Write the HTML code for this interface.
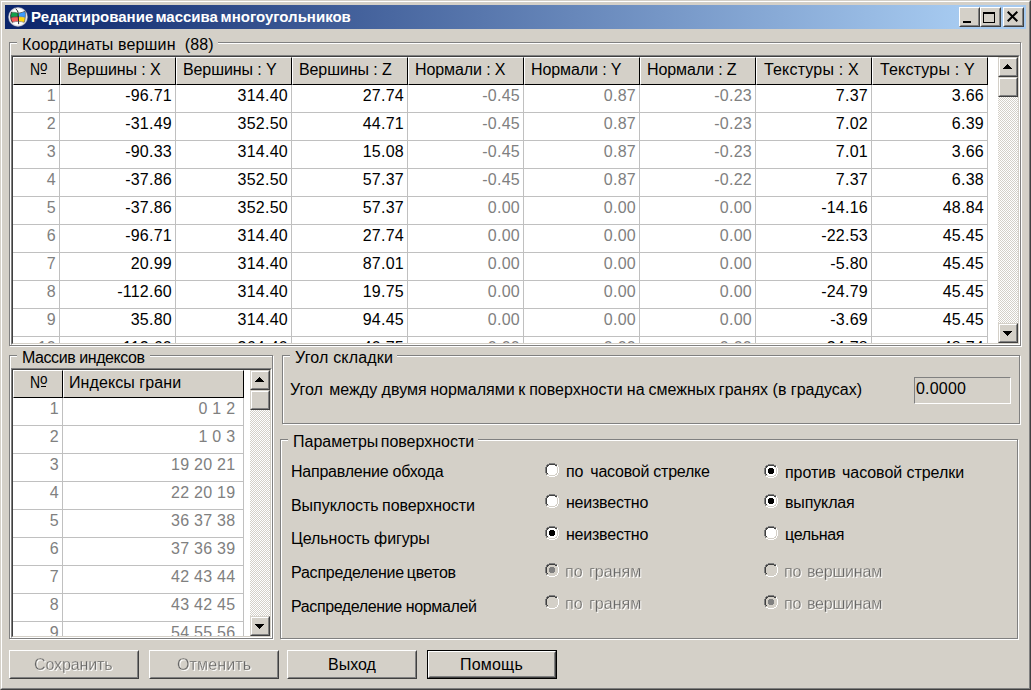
<!DOCTYPE html>
<html><head><meta charset="utf-8"><title>dlg</title>
<style>
html,body{margin:0;padding:0;}
body{width:1031px;height:690px;overflow:hidden;background:#d4d0c8;font-family:"Liberation Sans",sans-serif;font-size:16px;color:#000;position:relative;line-height:18px;}
div,span{box-sizing:border-box;}
.a{position:absolute;}
.t{position:absolute;white-space:pre;line-height:18px;height:18px;}
.dis{color:#666;text-shadow:1px 1px 0 #fff;will-change:transform;-webkit-text-stroke:0.3px #d4d0c8;}
.gw{position:absolute;border:1px solid #fff;}
.gg{position:absolute;border:1px solid #808080;}
.gl{position:absolute;background:#d4d0c8;white-space:pre;line-height:18px;height:18px;}
.gl span{position:absolute;top:0;}
.sunk{position:absolute;border-style:solid;border-width:1px;border-color:#808080 #fff #fff #808080;}
.sunk>.in{position:absolute;left:0;top:0;right:0;bottom:0;border-style:solid;border-width:1px;border-color:#404040 #d4d0c8 #d4d0c8 #404040;background:#fff;overflow:hidden;}
.hc{position:absolute;top:0;height:28px;background:#d4d0c8;border-style:solid;border-width:1px;border-color:#fff #000 #000 #fff;white-space:pre;line-height:18px;}
.hc span{position:absolute;top:3px;}
.hc span.no{width:20px;height:18px;}
.no b{font-weight:normal;position:absolute;left:0;top:0;transform-origin:0 0;transform:scaleX(.87);}
.no i{font-style:normal;position:absolute;left:10.4px;top:-4px;font-size:15px;transform-origin:0 0;transform:scaleX(.9);}
.no u{position:absolute;left:11px;top:12px;width:5px;height:1px;background:#000;}
.row{position:absolute;left:0;height:28px;border-bottom:1px solid #c0c0c0;}
.c{position:absolute;top:0;height:27px;border-right:1px solid #c0c0c0;text-align:right;padding-right:3px;letter-spacing:0.25px;line-height:18px;padding-top:2px;white-space:pre;}
.g{color:#808080;}
.sb{position:absolute;width:20px;background-color:#fff;background-image:linear-gradient(45deg,#d4d0c8 25%,transparent 25%,transparent 75%,#d4d0c8 75%),linear-gradient(45deg,#d4d0c8 25%,transparent 25%,transparent 75%,#d4d0c8 75%);background-size:2px 2px;background-position:0 0,1px 1px;}
.rb{position:absolute;background:#d4d0c8;border-style:solid;border-width:1px;border-color:#d4d0c8 #404040 #404040 #d4d0c8;}
.rb>i{position:absolute;left:0;top:0;right:0;bottom:0;border-style:solid;border-width:1px;border-color:#fff #808080 #808080 #fff;}
.btn{position:absolute;background:#d4d0c8;border-style:solid;border-width:1px;border-color:#fff #404040 #404040 #fff;}
.btn>i{position:absolute;left:0;top:0;right:0;bottom:0;border-style:solid;border-width:1px;border-color:#d4d0c8 #808080 #808080 #d4d0c8;font-style:normal;}
</style></head><body>

<div class="a" style="left:0;top:0;width:1031px;height:690px;border-style:solid;border-width:1px;border-color:#d4d0c8 #404040 #404040 #d4d0c8;"></div>
<div class="a" style="left:1px;top:1px;width:1029px;height:688px;border-style:solid;border-width:1px;border-color:#fff #808080 #808080 #fff;"></div>
<div class="a" style="left:5px;top:5px;width:1021px;height:24px;background:linear-gradient(90deg,#0a246a 0,#a6caf0 954px);"></div>
<svg class="a" style="left:6px;top:5px" width="24" height="24" viewBox="0 0 690 690">
<defs><radialGradient id="ig" cx="50%" cy="50%" r="50%"><stop offset="0.78" stop-color="#fff"/><stop offset="0.9" stop-color="#d4d6de"/><stop offset="1" stop-color="#6c7498"/></radialGradient></defs>
<circle cx="345" cy="343" r="286" fill="url(#ig)"/>
<path d="M160 208 Q260 212 358 238 L362 335 Q250 328 138 358 Q132 275 160 208Z" fill="#12a04c"/>
<path d="M372 238 Q470 226 548 182 Q562 270 552 355 Q465 328 376 328Z" fill="#3c9cff"/>
<path d="M140 368 Q250 338 362 340 L362 468 Q270 466 180 496 Q148 440 140 368Z" fill="#f25858"/>
<path d="M376 335 Q470 340 552 370 Q546 440 520 496 Q450 472 376 468Z" fill="#ffd80c"/>
<path d="M138 360 Q250 330 362 336" fill="none" stroke="#1a1a1a" stroke-width="20"/>
<path d="M362 334 Q465 330 552 360" fill="none" stroke="#3a3a2a" stroke-width="12"/>
<path d="M288 118 Q338 150 348 215 L364 540" fill="none" stroke="#0c0c0c" stroke-width="26" stroke-linecap="round"/>
<path d="M160 200 Q122 280 136 365 Q140 435 186 504" fill="none" stroke="#1c1c1c" stroke-width="24"/>
<path d="M550 180 Q566 270 554 362 Q548 440 522 500" fill="none" stroke="#3c3c3c" stroke-width="18"/>
<path d="M372 232 Q470 220 548 176" fill="none" stroke="#2c2c2c" stroke-width="18"/>
<path d="M160 204 Q260 208 350 232" fill="none" stroke="#3a3a3a" stroke-width="14"/>
<path d="M184 500 Q270 470 362 472 Q450 476 520 500" fill="none" stroke="#5a5a5a" stroke-width="16"/>
</svg>

<div class="t" style="left:31px;top:8px;font-size:15px;font-weight:bold;color:#fff;" id="title">Редактирование <i style="margin-left:-2.0px"></i>массива <i style="margin-left:-1.5px"></i>многоугольников</div>
<div class="a" style="left:959px;top:7px;width:21px;height:20px;background:#d4d0c8;border-style:solid;border-width:1px;border-color:#fff #404040 #404040 #fff;"><i style="position:absolute;left:0;top:0;right:0;bottom:0;border-style:solid;border-width:1px;border-color:#d4d0c8 #808080 #808080 #d4d0c8;"></i><b style="position:absolute;left:3px;top:13px;width:8px;height:2px;background:#000"></b></div>
<div class="a" style="left:980px;top:7px;width:21px;height:20px;background:#d4d0c8;border-style:solid;border-width:1px;border-color:#fff #404040 #404040 #fff;"><i style="position:absolute;left:0;top:0;right:0;bottom:0;border-style:solid;border-width:1px;border-color:#d4d0c8 #808080 #808080 #d4d0c8;"></i><b style="position:absolute;left:2px;top:4px;width:12px;height:11px;border:1px solid #000;border-top-width:2px;box-sizing:border-box"></b></div>
<div class="a" style="left:1003px;top:7px;width:21px;height:20px;background:#d4d0c8;border-style:solid;border-width:1px;border-color:#fff #404040 #404040 #fff;"><i style="position:absolute;left:0;top:0;right:0;bottom:0;border-style:solid;border-width:1px;border-color:#d4d0c8 #808080 #808080 #d4d0c8;"></i><svg style="position:absolute;left:3px;top:3px" width="13" height="13" viewBox="0 0 13 13"><path d="M0.7 0.7 L10.3 10.3 M10.3 0.7 L0.7 10.3" stroke="#000" stroke-width="2" fill="none"/></svg></div>
<div class="gw" style="left:10px;top:43px;width:1012px;height:304px"></div>
<div class="gg" style="left:9px;top:42px;width:1012px;height:304px"></div>
<div class="gl" style="left:17px;top:36px;width:201px"><span id="g1" style="left:5px;letter-spacing:0.136px">Координаты вершин  (88)</span></div>
<div class="gw" style="left:10px;top:356px;width:264px;height:284px"></div>
<div class="gg" style="left:9px;top:355px;width:264px;height:284px"></div>
<div class="gl" style="left:17px;top:349px;width:133px"><span id="g2" style="left:5px;letter-spacing:-0.429px">Массив индексов</span></div>
<div class="gw" style="left:283px;top:356px;width:738px;height:69px"></div>
<div class="gg" style="left:282px;top:355px;width:738px;height:69px"></div>
<div class="gl" style="left:290px;top:349px;width:107px"><span id="g3" style="left:5px;letter-spacing:0.182px">Угол складки</span></div>
<div class="gw" style="left:281px;top:440px;width:738px;height:200px"></div>
<div class="gg" style="left:280px;top:439px;width:738px;height:200px"></div>
<div class="gl" style="left:288px;top:433px;width:190px"><span id="g4" style="left:5px">Параметры <i style="margin-left:-2.0px"></i>поверхности</span></div>
<div class="sunk" style="left:11px;top:55px;width:1009px;height:290px"><div class="in">
<div class="hc" style="left:0px;width:47px"><span class="no" id="h1_0" style="left:16px"><b>N</b><i>o</i><u></u></span></div>
<div class="hc" style="left:47px;width:116px"><span id="h1_1" style="left:6px;letter-spacing:-0.100px">Вершины : X</span></div>
<div class="hc" style="left:163px;width:116px"><span id="h1_2" style="left:6px;letter-spacing:-0.100px">Вершины : Y</span></div>
<div class="hc" style="left:279px;width:116px"><span id="h1_3" style="left:6px;letter-spacing:-0.100px">Вершины : Z</span></div>
<div class="hc" style="left:395px;width:116px"><span id="h1_4" style="left:6px;letter-spacing:-0.100px">Нормали : X</span></div>
<div class="hc" style="left:511px;width:116px"><span id="h1_5" style="left:6px;letter-spacing:-0.100px">Нормали : Y</span></div>
<div class="hc" style="left:627px;width:116px"><span id="h1_6" style="left:6px;letter-spacing:-0.100px">Нормали : Z</span></div>
<div class="hc" style="left:743px;width:116px"><span id="h1_7" style="left:7px;letter-spacing:0.173px">Текстуры : X</span></div>
<div class="hc" style="left:859px;width:116px"><span id="h1_8" style="left:7px;letter-spacing:0.173px">Текстуры : Y</span></div>
<div class="row" style="top:28px;width:975px">
<div class="c g" style="left:0px;width:47px">1</div>
<div class="c" style="left:47px;width:116px">-96.71</div>
<div class="c" style="left:163px;width:116px">314.40</div>
<div class="c" style="left:279px;width:116px">27.74</div>
<div class="c g" style="left:395px;width:116px">-0.45</div>
<div class="c g" style="left:511px;width:116px">0.87</div>
<div class="c g" style="left:627px;width:116px">-0.23</div>
<div class="c" style="left:743px;width:116px">7.37</div>
<div class="c" style="left:859px;width:116px">3.66</div>
</div>
<div class="row" style="top:56px;width:975px">
<div class="c g" style="left:0px;width:47px">2</div>
<div class="c" style="left:47px;width:116px">-31.49</div>
<div class="c" style="left:163px;width:116px">352.50</div>
<div class="c" style="left:279px;width:116px">44.71</div>
<div class="c g" style="left:395px;width:116px">-0.45</div>
<div class="c g" style="left:511px;width:116px">0.87</div>
<div class="c g" style="left:627px;width:116px">-0.23</div>
<div class="c" style="left:743px;width:116px">7.02</div>
<div class="c" style="left:859px;width:116px">6.39</div>
</div>
<div class="row" style="top:84px;width:975px">
<div class="c g" style="left:0px;width:47px">3</div>
<div class="c" style="left:47px;width:116px">-90.33</div>
<div class="c" style="left:163px;width:116px">314.40</div>
<div class="c" style="left:279px;width:116px">15.08</div>
<div class="c g" style="left:395px;width:116px">-0.45</div>
<div class="c g" style="left:511px;width:116px">0.87</div>
<div class="c g" style="left:627px;width:116px">-0.23</div>
<div class="c" style="left:743px;width:116px">7.01</div>
<div class="c" style="left:859px;width:116px">3.66</div>
</div>
<div class="row" style="top:112px;width:975px">
<div class="c g" style="left:0px;width:47px">4</div>
<div class="c" style="left:47px;width:116px">-37.86</div>
<div class="c" style="left:163px;width:116px">352.50</div>
<div class="c" style="left:279px;width:116px">57.37</div>
<div class="c g" style="left:395px;width:116px">-0.45</div>
<div class="c g" style="left:511px;width:116px">0.87</div>
<div class="c g" style="left:627px;width:116px">-0.22</div>
<div class="c" style="left:743px;width:116px">7.37</div>
<div class="c" style="left:859px;width:116px">6.38</div>
</div>
<div class="row" style="top:140px;width:975px">
<div class="c g" style="left:0px;width:47px">5</div>
<div class="c" style="left:47px;width:116px">-37.86</div>
<div class="c" style="left:163px;width:116px">352.50</div>
<div class="c" style="left:279px;width:116px">57.37</div>
<div class="c g" style="left:395px;width:116px">0.00</div>
<div class="c g" style="left:511px;width:116px">0.00</div>
<div class="c g" style="left:627px;width:116px">0.00</div>
<div class="c" style="left:743px;width:116px">-14.16</div>
<div class="c" style="left:859px;width:116px">48.84</div>
</div>
<div class="row" style="top:168px;width:975px">
<div class="c g" style="left:0px;width:47px">6</div>
<div class="c" style="left:47px;width:116px">-96.71</div>
<div class="c" style="left:163px;width:116px">314.40</div>
<div class="c" style="left:279px;width:116px">27.74</div>
<div class="c g" style="left:395px;width:116px">0.00</div>
<div class="c g" style="left:511px;width:116px">0.00</div>
<div class="c g" style="left:627px;width:116px">0.00</div>
<div class="c" style="left:743px;width:116px">-22.53</div>
<div class="c" style="left:859px;width:116px">45.45</div>
</div>
<div class="row" style="top:196px;width:975px">
<div class="c g" style="left:0px;width:47px">7</div>
<div class="c" style="left:47px;width:116px">20.99</div>
<div class="c" style="left:163px;width:116px">314.40</div>
<div class="c" style="left:279px;width:116px">87.01</div>
<div class="c g" style="left:395px;width:116px">0.00</div>
<div class="c g" style="left:511px;width:116px">0.00</div>
<div class="c g" style="left:627px;width:116px">0.00</div>
<div class="c" style="left:743px;width:116px">-5.80</div>
<div class="c" style="left:859px;width:116px">45.45</div>
</div>
<div class="row" style="top:224px;width:975px">
<div class="c g" style="left:0px;width:47px">8</div>
<div class="c" style="left:47px;width:116px">-112.60</div>
<div class="c" style="left:163px;width:116px">314.40</div>
<div class="c" style="left:279px;width:116px">19.75</div>
<div class="c g" style="left:395px;width:116px">0.00</div>
<div class="c g" style="left:511px;width:116px">0.00</div>
<div class="c g" style="left:627px;width:116px">0.00</div>
<div class="c" style="left:743px;width:116px">-24.79</div>
<div class="c" style="left:859px;width:116px">45.45</div>
</div>
<div class="row" style="top:252px;width:975px">
<div class="c g" style="left:0px;width:47px">9</div>
<div class="c" style="left:47px;width:116px">35.80</div>
<div class="c" style="left:163px;width:116px">314.40</div>
<div class="c" style="left:279px;width:116px">94.45</div>
<div class="c g" style="left:395px;width:116px">0.00</div>
<div class="c g" style="left:511px;width:116px">0.00</div>
<div class="c g" style="left:627px;width:116px">0.00</div>
<div class="c" style="left:743px;width:116px">-3.69</div>
<div class="c" style="left:859px;width:116px">45.45</div>
</div>
<div class="row" style="top:280px;width:975px">
<div class="c g" style="left:0px;width:47px">10</div>
<div class="c" style="left:47px;width:116px">112.60</div>
<div class="c" style="left:163px;width:116px">364.40</div>
<div class="c" style="left:279px;width:116px">40.75</div>
<div class="c g" style="left:395px;width:116px">0.00</div>
<div class="c g" style="left:511px;width:116px">0.00</div>
<div class="c g" style="left:627px;width:116px">0.00</div>
<div class="c" style="left:743px;width:116px">-34.78</div>
<div class="c" style="left:859px;width:116px">48.74</div>
</div>
<div class="sb" style="left:985px;top:0;height:286px"></div>
<div class="rb" style="left:985px;top:0;width:20px;height:20px"><i></i><svg style="position:absolute;left:4px;top:6px" width="9" height="5" viewBox="0 0 9 5" shape-rendering="crispEdges"><path d="M4 0h1v1h1v1h1v1h1v1h1v1H0v-1h1v-1h1v-1h1v-1h1z" fill="#000"/></svg></div>
<div class="rb" style="left:985px;top:20px;width:20px;height:20px"><i></i></div>
<div class="rb" style="left:985px;top:266px;width:20px;height:20px"><i></i><svg style="position:absolute;left:4px;top:7px" width="9" height="5" viewBox="0 0 9 5" shape-rendering="crispEdges"><path d="M0 0h9v1h-1v1h-1v1h-1v1h-1v1h-1v-1h-1v-1h-1v-1h-1v-1h-1z" fill="#000"/></svg></div>
</div></div>
<div class="sunk" style="left:11px;top:368px;width:261px;height:270px"><div class="in">
<div class="hc" style="left:0;width:50px"><span class="no" id="h2_0" style="left:16px"><b>N</b><i>o</i><u></u></span></div>
<div class="hc" style="left:50px;width:181px"><span id="h2_1" style="left:5px;letter-spacing:0.083px">Индексы грани</span></div>
<div class="row" style="top:28px;width:231px"><div class="c g" style="left:0;width:50px">1</div><div class="c g" style="left:50px;width:181px">0 1 2 </div></div>
<div class="row" style="top:56px;width:231px"><div class="c g" style="left:0;width:50px">2</div><div class="c g" style="left:50px;width:181px">1 0 3 </div></div>
<div class="row" style="top:84px;width:231px"><div class="c g" style="left:0;width:50px">3</div><div class="c g" style="left:50px;width:181px">19 20 21 </div></div>
<div class="row" style="top:112px;width:231px"><div class="c g" style="left:0;width:50px">4</div><div class="c g" style="left:50px;width:181px">22 20 19 </div></div>
<div class="row" style="top:140px;width:231px"><div class="c g" style="left:0;width:50px">5</div><div class="c g" style="left:50px;width:181px">36 37 38 </div></div>
<div class="row" style="top:168px;width:231px"><div class="c g" style="left:0;width:50px">6</div><div class="c g" style="left:50px;width:181px">37 36 39 </div></div>
<div class="row" style="top:196px;width:231px"><div class="c g" style="left:0;width:50px">7</div><div class="c g" style="left:50px;width:181px">42 43 44 </div></div>
<div class="row" style="top:224px;width:231px"><div class="c g" style="left:0;width:50px">8</div><div class="c g" style="left:50px;width:181px">43 42 45 </div></div>
<div class="row" style="top:252px;width:231px"><div class="c g" style="left:0;width:50px">9</div><div class="c g" style="left:50px;width:181px">54 55 56 </div></div>
<div class="row" style="top:280px;width:231px"><div class="c g" style="left:0;width:50px">10</div><div class="c g" style="left:50px;width:181px">57 55 54 </div></div>
<div class="sb" style="left:237px;top:0;height:266px"></div>
<div class="rb" style="left:237px;top:0;width:20px;height:20px"><i></i><svg style="position:absolute;left:4px;top:6px" width="9" height="5" viewBox="0 0 9 5" shape-rendering="crispEdges"><path d="M4 0h1v1h1v1h1v1h1v1h1v1H0v-1h1v-1h1v-1h1v-1h1z" fill="#000"/></svg></div>
<div class="rb" style="left:237px;top:20px;width:20px;height:20px"><i></i></div>
<div class="rb" style="left:237px;top:246px;width:20px;height:20px"><i></i><svg style="position:absolute;left:4px;top:7px" width="9" height="5" viewBox="0 0 9 5" shape-rendering="crispEdges"><path d="M0 0h9v1h-1v1h-1v1h-1v1h-1v1h-1v-1h-1v-1h-1v-1h-1v-1h-1z" fill="#000"/></svg></div>
</div></div>
<div class="t" id="ang" style="left:290px;letter-spacing:0.014px;top:381px">Угол <i style="margin-left:2.0px"></i>между двумя <i style="margin-left:-1.0px"></i>нормалями <i style="margin-left:-1.0px"></i>к <i style="margin-left:-0.5px"></i>поверхности <i style="margin-left:-0.5px"></i>на <i style="margin-left:-0.5px"></i>смежных <i style="margin-left:-1.0px"></i>гранях (в градусах)</div>
<div class="a" style="left:914px;top:377px;width:97px;height:27px;border-style:solid;border-width:1px;border-color:#808080 #fff #fff #808080;"><span class="t" id="edit" style="left:1px;letter-spacing:0.200px;top:2px">0.0000</span></div>
<div class="t" id="lab0" style="left:291px;letter-spacing:-0.235px;top:463px">Направление обхода</div>
<div class="t" id="lab1" style="left:291px;letter-spacing:-0.048px;top:497px">Выпуклость <i style="margin-left:-1.0px"></i>поверхности</div>
<div class="t" id="lab2" style="left:291px;letter-spacing:-0.067px;top:530px">Цельность фигуры</div>
<div class="t" id="lab3" style="left:291px;letter-spacing:-0.211px;top:564px">Распределение <i style="margin-left:-1.5px"></i>цветов</div>
<div class="t" id="lab4" style="left:291px;letter-spacing:-0.381px;top:598px">Распределение нормалей</div>
<svg class="a" style="left:545px;top:463px" width="14" height="14" viewBox="0 0 14 14" shape-rendering="crispEdges"><path d="M4 0h6v1h-6zM2 1h2v1h-2zM10 1h2v1h-2zM1 2h1v1h-1zM1 3h1v1h-1zM0 4h1v1h-1zM0 5h1v1h-1zM0 6h1v1h-1zM0 7h1v1h-1zM0 8h1v1h-1zM0 9h1v1h-1zM1 10h1v1h-1zM1 11h1v1h-1z" fill="#808080"/><path d="M4 1h6v1h-6zM2 2h2v1h-2zM10 2h2v1h-2zM2 3h1v1h-1zM1 4h1v1h-1zM1 5h1v1h-1zM1 6h1v1h-1zM1 7h1v1h-1zM1 8h1v1h-1zM1 9h1v1h-1zM2 10h1v1h-1z" fill="#404040"/><path d="M4 2h6v1h-6zM3 3h8v1h-8zM2 4h10v1h-10zM2 5h10v1h-10zM2 6h10v1h-10zM2 7h10v1h-10zM2 8h10v1h-10zM2 9h10v1h-10zM3 10h8v1h-8zM4 11h6v1h-6z" fill="#fff"/><path d="M12 2h1v1h-1zM12 3h1v1h-1zM13 4h1v1h-1zM13 5h1v1h-1zM13 6h1v1h-1zM13 7h1v1h-1zM13 8h1v1h-1zM13 9h1v1h-1zM12 10h1v1h-1zM12 11h1v1h-1zM2 12h2v1h-2zM10 12h2v1h-2zM4 13h6v1h-6z" fill="#ffffff"/><path d="M11 3h1v1h-1zM12 4h1v1h-1zM12 5h1v1h-1zM12 6h1v1h-1zM12 7h1v1h-1zM12 8h1v1h-1zM12 9h1v1h-1zM11 10h1v1h-1zM2 11h2v1h-2zM10 11h2v1h-2zM4 12h6v1h-6z" fill="#d4d0c8"/></svg>
<svg class="a" style="left:764px;top:464px" width="14" height="14" viewBox="0 0 14 14" shape-rendering="crispEdges"><path d="M4 0h6v1h-6zM2 1h2v1h-2zM10 1h2v1h-2zM1 2h1v1h-1zM1 3h1v1h-1zM0 4h1v1h-1zM0 5h1v1h-1zM0 6h1v1h-1zM0 7h1v1h-1zM0 8h1v1h-1zM0 9h1v1h-1zM1 10h1v1h-1zM1 11h1v1h-1z" fill="#808080"/><path d="M4 1h6v1h-6zM2 2h2v1h-2zM10 2h2v1h-2zM2 3h1v1h-1zM1 4h1v1h-1zM1 5h1v1h-1zM1 6h1v1h-1zM1 7h1v1h-1zM1 8h1v1h-1zM1 9h1v1h-1zM2 10h1v1h-1z" fill="#404040"/><path d="M4 2h6v1h-6zM3 3h8v1h-8zM2 4h10v1h-10zM2 5h10v1h-10zM2 6h10v1h-10zM2 7h10v1h-10zM2 8h10v1h-10zM2 9h10v1h-10zM3 10h8v1h-8zM4 11h6v1h-6z" fill="#fff"/><path d="M12 2h1v1h-1zM12 3h1v1h-1zM13 4h1v1h-1zM13 5h1v1h-1zM13 6h1v1h-1zM13 7h1v1h-1zM13 8h1v1h-1zM13 9h1v1h-1zM12 10h1v1h-1zM12 11h1v1h-1zM2 12h2v1h-2zM10 12h2v1h-2zM4 13h6v1h-6z" fill="#ffffff"/><path d="M11 3h1v1h-1zM12 4h1v1h-1zM12 5h1v1h-1zM12 6h1v1h-1zM12 7h1v1h-1zM12 8h1v1h-1zM12 9h1v1h-1zM11 10h1v1h-1zM2 11h2v1h-2zM10 11h2v1h-2zM4 12h6v1h-6z" fill="#d4d0c8"/><path d="M5 4h4v1h1v4h-1v1h-4v-1h-1v-4h1z" fill="#000"/></svg>
<div class="t" id="rl0" style="left:566px;letter-spacing:-0.235px;top:463px">по <i style="margin-left:3.0px"></i>часовой стрелке</div>
<div class="t" id="rr0" style="left:785px;letter-spacing:-0.048px;top:464px">против <i style="margin-left:2.0px"></i>часовой стрелки</div>
<svg class="a" style="left:545px;top:494px" width="14" height="14" viewBox="0 0 14 14" shape-rendering="crispEdges"><path d="M4 0h6v1h-6zM2 1h2v1h-2zM10 1h2v1h-2zM1 2h1v1h-1zM1 3h1v1h-1zM0 4h1v1h-1zM0 5h1v1h-1zM0 6h1v1h-1zM0 7h1v1h-1zM0 8h1v1h-1zM0 9h1v1h-1zM1 10h1v1h-1zM1 11h1v1h-1z" fill="#808080"/><path d="M4 1h6v1h-6zM2 2h2v1h-2zM10 2h2v1h-2zM2 3h1v1h-1zM1 4h1v1h-1zM1 5h1v1h-1zM1 6h1v1h-1zM1 7h1v1h-1zM1 8h1v1h-1zM1 9h1v1h-1zM2 10h1v1h-1z" fill="#404040"/><path d="M4 2h6v1h-6zM3 3h8v1h-8zM2 4h10v1h-10zM2 5h10v1h-10zM2 6h10v1h-10zM2 7h10v1h-10zM2 8h10v1h-10zM2 9h10v1h-10zM3 10h8v1h-8zM4 11h6v1h-6z" fill="#fff"/><path d="M12 2h1v1h-1zM12 3h1v1h-1zM13 4h1v1h-1zM13 5h1v1h-1zM13 6h1v1h-1zM13 7h1v1h-1zM13 8h1v1h-1zM13 9h1v1h-1zM12 10h1v1h-1zM12 11h1v1h-1zM2 12h2v1h-2zM10 12h2v1h-2zM4 13h6v1h-6z" fill="#ffffff"/><path d="M11 3h1v1h-1zM12 4h1v1h-1zM12 5h1v1h-1zM12 6h1v1h-1zM12 7h1v1h-1zM12 8h1v1h-1zM12 9h1v1h-1zM11 10h1v1h-1zM2 11h2v1h-2zM10 11h2v1h-2zM4 12h6v1h-6z" fill="#d4d0c8"/></svg>
<svg class="a" style="left:764px;top:494px" width="14" height="14" viewBox="0 0 14 14" shape-rendering="crispEdges"><path d="M4 0h6v1h-6zM2 1h2v1h-2zM10 1h2v1h-2zM1 2h1v1h-1zM1 3h1v1h-1zM0 4h1v1h-1zM0 5h1v1h-1zM0 6h1v1h-1zM0 7h1v1h-1zM0 8h1v1h-1zM0 9h1v1h-1zM1 10h1v1h-1zM1 11h1v1h-1z" fill="#808080"/><path d="M4 1h6v1h-6zM2 2h2v1h-2zM10 2h2v1h-2zM2 3h1v1h-1zM1 4h1v1h-1zM1 5h1v1h-1zM1 6h1v1h-1zM1 7h1v1h-1zM1 8h1v1h-1zM1 9h1v1h-1zM2 10h1v1h-1z" fill="#404040"/><path d="M4 2h6v1h-6zM3 3h8v1h-8zM2 4h10v1h-10zM2 5h10v1h-10zM2 6h10v1h-10zM2 7h10v1h-10zM2 8h10v1h-10zM2 9h10v1h-10zM3 10h8v1h-8zM4 11h6v1h-6z" fill="#fff"/><path d="M12 2h1v1h-1zM12 3h1v1h-1zM13 4h1v1h-1zM13 5h1v1h-1zM13 6h1v1h-1zM13 7h1v1h-1zM13 8h1v1h-1zM13 9h1v1h-1zM12 10h1v1h-1zM12 11h1v1h-1zM2 12h2v1h-2zM10 12h2v1h-2zM4 13h6v1h-6z" fill="#ffffff"/><path d="M11 3h1v1h-1zM12 4h1v1h-1zM12 5h1v1h-1zM12 6h1v1h-1zM12 7h1v1h-1zM12 8h1v1h-1zM12 9h1v1h-1zM11 10h1v1h-1zM2 11h2v1h-2zM10 11h2v1h-2zM4 12h6v1h-6z" fill="#d4d0c8"/><path d="M5 4h4v1h1v4h-1v1h-4v-1h-1v-4h1z" fill="#000"/></svg>
<div class="t" id="rl1" style="left:566px;letter-spacing:-0.222px;top:494px">неизвестно</div>
<div class="t" id="rr1" style="left:785px;letter-spacing:-0.143px;top:494px">выпуклая</div>
<svg class="a" style="left:545px;top:526px" width="14" height="14" viewBox="0 0 14 14" shape-rendering="crispEdges"><path d="M4 0h6v1h-6zM2 1h2v1h-2zM10 1h2v1h-2zM1 2h1v1h-1zM1 3h1v1h-1zM0 4h1v1h-1zM0 5h1v1h-1zM0 6h1v1h-1zM0 7h1v1h-1zM0 8h1v1h-1zM0 9h1v1h-1zM1 10h1v1h-1zM1 11h1v1h-1z" fill="#808080"/><path d="M4 1h6v1h-6zM2 2h2v1h-2zM10 2h2v1h-2zM2 3h1v1h-1zM1 4h1v1h-1zM1 5h1v1h-1zM1 6h1v1h-1zM1 7h1v1h-1zM1 8h1v1h-1zM1 9h1v1h-1zM2 10h1v1h-1z" fill="#404040"/><path d="M4 2h6v1h-6zM3 3h8v1h-8zM2 4h10v1h-10zM2 5h10v1h-10zM2 6h10v1h-10zM2 7h10v1h-10zM2 8h10v1h-10zM2 9h10v1h-10zM3 10h8v1h-8zM4 11h6v1h-6z" fill="#fff"/><path d="M12 2h1v1h-1zM12 3h1v1h-1zM13 4h1v1h-1zM13 5h1v1h-1zM13 6h1v1h-1zM13 7h1v1h-1zM13 8h1v1h-1zM13 9h1v1h-1zM12 10h1v1h-1zM12 11h1v1h-1zM2 12h2v1h-2zM10 12h2v1h-2zM4 13h6v1h-6z" fill="#ffffff"/><path d="M11 3h1v1h-1zM12 4h1v1h-1zM12 5h1v1h-1zM12 6h1v1h-1zM12 7h1v1h-1zM12 8h1v1h-1zM12 9h1v1h-1zM11 10h1v1h-1zM2 11h2v1h-2zM10 11h2v1h-2zM4 12h6v1h-6z" fill="#d4d0c8"/><path d="M5 4h4v1h1v4h-1v1h-4v-1h-1v-4h1z" fill="#000"/></svg>
<svg class="a" style="left:764px;top:526px" width="14" height="14" viewBox="0 0 14 14" shape-rendering="crispEdges"><path d="M4 0h6v1h-6zM2 1h2v1h-2zM10 1h2v1h-2zM1 2h1v1h-1zM1 3h1v1h-1zM0 4h1v1h-1zM0 5h1v1h-1zM0 6h1v1h-1zM0 7h1v1h-1zM0 8h1v1h-1zM0 9h1v1h-1zM1 10h1v1h-1zM1 11h1v1h-1z" fill="#808080"/><path d="M4 1h6v1h-6zM2 2h2v1h-2zM10 2h2v1h-2zM2 3h1v1h-1zM1 4h1v1h-1zM1 5h1v1h-1zM1 6h1v1h-1zM1 7h1v1h-1zM1 8h1v1h-1zM1 9h1v1h-1zM2 10h1v1h-1z" fill="#404040"/><path d="M4 2h6v1h-6zM3 3h8v1h-8zM2 4h10v1h-10zM2 5h10v1h-10zM2 6h10v1h-10zM2 7h10v1h-10zM2 8h10v1h-10zM2 9h10v1h-10zM3 10h8v1h-8zM4 11h6v1h-6z" fill="#fff"/><path d="M12 2h1v1h-1zM12 3h1v1h-1zM13 4h1v1h-1zM13 5h1v1h-1zM13 6h1v1h-1zM13 7h1v1h-1zM13 8h1v1h-1zM13 9h1v1h-1zM12 10h1v1h-1zM12 11h1v1h-1zM2 12h2v1h-2zM10 12h2v1h-2zM4 13h6v1h-6z" fill="#ffffff"/><path d="M11 3h1v1h-1zM12 4h1v1h-1zM12 5h1v1h-1zM12 6h1v1h-1zM12 7h1v1h-1zM12 8h1v1h-1zM12 9h1v1h-1zM11 10h1v1h-1zM2 11h2v1h-2zM10 11h2v1h-2zM4 12h6v1h-6z" fill="#d4d0c8"/></svg>
<div class="t" id="rl2" style="left:566px;letter-spacing:-0.222px;top:526px">неизвестно</div>
<div class="t" id="rr2" style="left:785px;letter-spacing:-0.333px;top:526px">цельная</div>
<svg class="a" style="left:545px;top:563px" width="14" height="14" viewBox="0 0 14 14" shape-rendering="crispEdges"><path d="M4 0h6v1h-6zM2 1h2v1h-2zM10 1h2v1h-2zM1 2h1v1h-1zM1 3h1v1h-1zM0 4h1v1h-1zM0 5h1v1h-1zM0 6h1v1h-1zM0 7h1v1h-1zM0 8h1v1h-1zM0 9h1v1h-1zM1 10h1v1h-1zM1 11h1v1h-1z" fill="#808080"/><path d="M4 1h6v1h-6zM2 2h2v1h-2zM10 2h2v1h-2zM2 3h1v1h-1zM1 4h1v1h-1zM1 5h1v1h-1zM1 6h1v1h-1zM1 7h1v1h-1zM1 8h1v1h-1zM1 9h1v1h-1zM2 10h1v1h-1z" fill="#404040"/><path d="M4 2h6v1h-6zM3 3h8v1h-8zM2 4h10v1h-10zM2 5h10v1h-10zM2 6h10v1h-10zM2 7h10v1h-10zM2 8h10v1h-10zM2 9h10v1h-10zM3 10h8v1h-8zM4 11h6v1h-6z" fill="#d4d0c8"/><path d="M12 2h1v1h-1zM12 3h1v1h-1zM13 4h1v1h-1zM13 5h1v1h-1zM13 6h1v1h-1zM13 7h1v1h-1zM13 8h1v1h-1zM13 9h1v1h-1zM12 10h1v1h-1zM12 11h1v1h-1zM2 12h2v1h-2zM10 12h2v1h-2zM4 13h6v1h-6z" fill="#ffffff"/><path d="M11 3h1v1h-1zM12 4h1v1h-1zM12 5h1v1h-1zM12 6h1v1h-1zM12 7h1v1h-1zM12 8h1v1h-1zM12 9h1v1h-1zM11 10h1v1h-1zM2 11h2v1h-2zM10 11h2v1h-2zM4 12h6v1h-6z" fill="#d4d0c8"/><path d="M5 4h4v1h1v4h-1v1h-4v-1h-1v-4h1z" fill="#808080"/></svg>
<svg class="a" style="left:764px;top:563px" width="14" height="14" viewBox="0 0 14 14" shape-rendering="crispEdges"><path d="M4 0h6v1h-6zM2 1h2v1h-2zM10 1h2v1h-2zM1 2h1v1h-1zM1 3h1v1h-1zM0 4h1v1h-1zM0 5h1v1h-1zM0 6h1v1h-1zM0 7h1v1h-1zM0 8h1v1h-1zM0 9h1v1h-1zM1 10h1v1h-1zM1 11h1v1h-1z" fill="#808080"/><path d="M4 1h6v1h-6zM2 2h2v1h-2zM10 2h2v1h-2zM2 3h1v1h-1zM1 4h1v1h-1zM1 5h1v1h-1zM1 6h1v1h-1zM1 7h1v1h-1zM1 8h1v1h-1zM1 9h1v1h-1zM2 10h1v1h-1z" fill="#404040"/><path d="M4 2h6v1h-6zM3 3h8v1h-8zM2 4h10v1h-10zM2 5h10v1h-10zM2 6h10v1h-10zM2 7h10v1h-10zM2 8h10v1h-10zM2 9h10v1h-10zM3 10h8v1h-8zM4 11h6v1h-6z" fill="#d4d0c8"/><path d="M12 2h1v1h-1zM12 3h1v1h-1zM13 4h1v1h-1zM13 5h1v1h-1zM13 6h1v1h-1zM13 7h1v1h-1zM13 8h1v1h-1zM13 9h1v1h-1zM12 10h1v1h-1zM12 11h1v1h-1zM2 12h2v1h-2zM10 12h2v1h-2zM4 13h6v1h-6z" fill="#ffffff"/><path d="M11 3h1v1h-1zM12 4h1v1h-1zM12 5h1v1h-1zM12 6h1v1h-1zM12 7h1v1h-1zM12 8h1v1h-1zM12 9h1v1h-1zM11 10h1v1h-1zM2 11h2v1h-2zM10 11h2v1h-2zM4 12h6v1h-6z" fill="#d4d0c8"/></svg>
<div class="t dis" id="rl3" style="left:565px;top:563px">по <i style="margin-left:2.0px"></i>граням</div>
<div class="t dis" id="rr3" style="left:784px;letter-spacing:-0.200px;top:563px">по <i style="margin-left:1.5px"></i>вершинам</div>
<svg class="a" style="left:545px;top:595px" width="14" height="14" viewBox="0 0 14 14" shape-rendering="crispEdges"><path d="M4 0h6v1h-6zM2 1h2v1h-2zM10 1h2v1h-2zM1 2h1v1h-1zM1 3h1v1h-1zM0 4h1v1h-1zM0 5h1v1h-1zM0 6h1v1h-1zM0 7h1v1h-1zM0 8h1v1h-1zM0 9h1v1h-1zM1 10h1v1h-1zM1 11h1v1h-1z" fill="#808080"/><path d="M4 1h6v1h-6zM2 2h2v1h-2zM10 2h2v1h-2zM2 3h1v1h-1zM1 4h1v1h-1zM1 5h1v1h-1zM1 6h1v1h-1zM1 7h1v1h-1zM1 8h1v1h-1zM1 9h1v1h-1zM2 10h1v1h-1z" fill="#404040"/><path d="M4 2h6v1h-6zM3 3h8v1h-8zM2 4h10v1h-10zM2 5h10v1h-10zM2 6h10v1h-10zM2 7h10v1h-10zM2 8h10v1h-10zM2 9h10v1h-10zM3 10h8v1h-8zM4 11h6v1h-6z" fill="#d4d0c8"/><path d="M12 2h1v1h-1zM12 3h1v1h-1zM13 4h1v1h-1zM13 5h1v1h-1zM13 6h1v1h-1zM13 7h1v1h-1zM13 8h1v1h-1zM13 9h1v1h-1zM12 10h1v1h-1zM12 11h1v1h-1zM2 12h2v1h-2zM10 12h2v1h-2zM4 13h6v1h-6z" fill="#ffffff"/><path d="M11 3h1v1h-1zM12 4h1v1h-1zM12 5h1v1h-1zM12 6h1v1h-1zM12 7h1v1h-1zM12 8h1v1h-1zM12 9h1v1h-1zM11 10h1v1h-1zM2 11h2v1h-2zM10 11h2v1h-2zM4 12h6v1h-6z" fill="#d4d0c8"/></svg>
<svg class="a" style="left:764px;top:595px" width="14" height="14" viewBox="0 0 14 14" shape-rendering="crispEdges"><path d="M4 0h6v1h-6zM2 1h2v1h-2zM10 1h2v1h-2zM1 2h1v1h-1zM1 3h1v1h-1zM0 4h1v1h-1zM0 5h1v1h-1zM0 6h1v1h-1zM0 7h1v1h-1zM0 8h1v1h-1zM0 9h1v1h-1zM1 10h1v1h-1zM1 11h1v1h-1z" fill="#808080"/><path d="M4 1h6v1h-6zM2 2h2v1h-2zM10 2h2v1h-2zM2 3h1v1h-1zM1 4h1v1h-1zM1 5h1v1h-1zM1 6h1v1h-1zM1 7h1v1h-1zM1 8h1v1h-1zM1 9h1v1h-1zM2 10h1v1h-1z" fill="#404040"/><path d="M4 2h6v1h-6zM3 3h8v1h-8zM2 4h10v1h-10zM2 5h10v1h-10zM2 6h10v1h-10zM2 7h10v1h-10zM2 8h10v1h-10zM2 9h10v1h-10zM3 10h8v1h-8zM4 11h6v1h-6z" fill="#d4d0c8"/><path d="M12 2h1v1h-1zM12 3h1v1h-1zM13 4h1v1h-1zM13 5h1v1h-1zM13 6h1v1h-1zM13 7h1v1h-1zM13 8h1v1h-1zM13 9h1v1h-1zM12 10h1v1h-1zM12 11h1v1h-1zM2 12h2v1h-2zM10 12h2v1h-2zM4 13h6v1h-6z" fill="#ffffff"/><path d="M11 3h1v1h-1zM12 4h1v1h-1zM12 5h1v1h-1zM12 6h1v1h-1zM12 7h1v1h-1zM12 8h1v1h-1zM12 9h1v1h-1zM11 10h1v1h-1zM2 11h2v1h-2zM10 11h2v1h-2zM4 12h6v1h-6z" fill="#d4d0c8"/><path d="M5 4h4v1h1v4h-1v1h-4v-1h-1v-4h1z" fill="#808080"/></svg>
<div class="t dis" id="rl4" style="left:565px;top:595px">по <i style="margin-left:2.0px"></i>граням</div>
<div class="t dis" id="rr4" style="left:784px;letter-spacing:-0.200px;top:595px">по <i style="margin-left:1.5px"></i>вершинам</div>
<div class="btn" style="left:9px;top:650px;width:130px;height:29px"><i></i></div>
<div class="t dis" id="b0" style="left:34px;letter-spacing:-0.125px;top:656px">Сохранить</div>
<div class="btn" style="left:149px;top:650px;width:130px;height:29px"><i></i></div>
<div class="t dis" id="b1" style="left:177px;letter-spacing:0.143px;top:656px">Отменить</div>
<div class="btn" style="left:287px;top:650px;width:130px;height:29px"><i></i></div>
<div class="t" id="b2" style="left:328px;top:656px">Выход</div>
<div class="a" style="left:427px;top:650px;width:130px;height:29px;background:#000"></div>
<div class="btn" style="left:428px;top:651px;width:128px;height:27px"><i></i></div>
<div class="t" id="b3" style="left:460px;letter-spacing:0.200px;top:656px">Помощь</div>
</body></html>
